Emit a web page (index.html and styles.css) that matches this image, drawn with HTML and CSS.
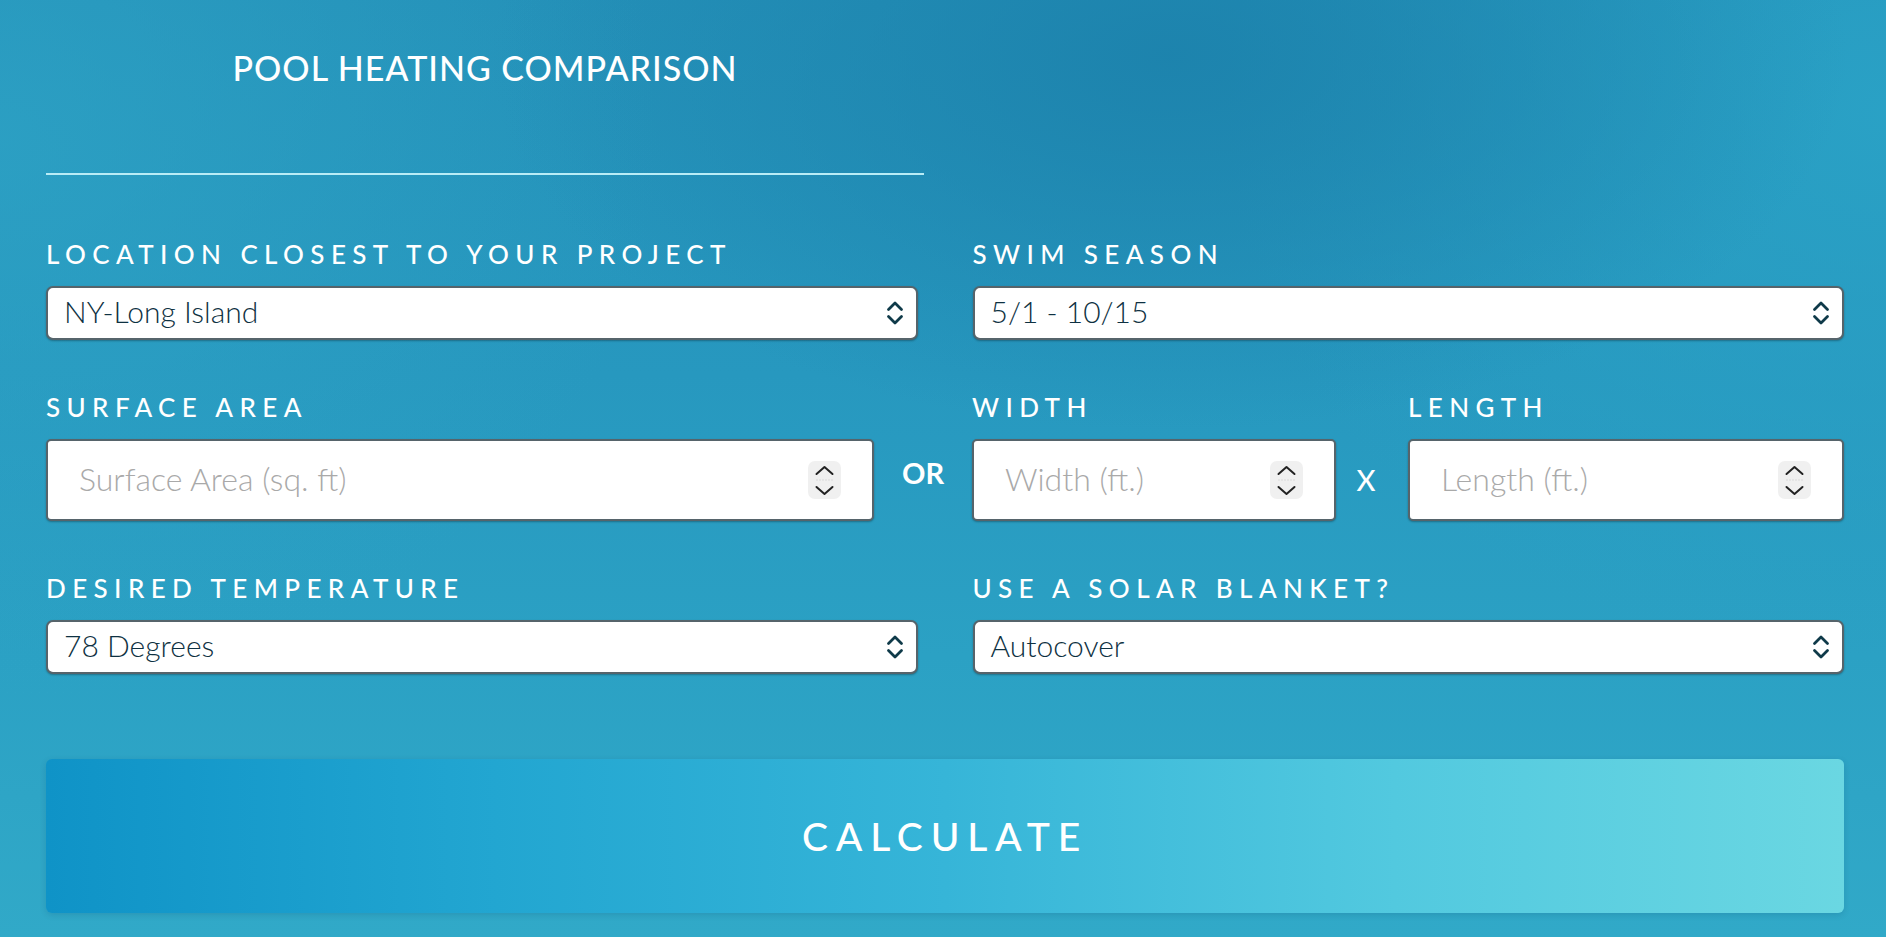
FILE: index.html
```html
<!DOCTYPE html>
<html lang="en">
<head>
<meta charset="utf-8">
<title>Pool Heating Comparison</title>
<link rel="stylesheet" href="styles.css">
</head>
<body>
<main class="calc">
  <header class="calc-head">
    <h1 class="calc-title">POOL HEATING COMPARISON</h1>
    <div class="calc-divider"></div>
  </header>

  <div class="row row-two">
    <div class="field">
      <div class="field-label">LOCATION CLOSEST TO YOUR PROJECT</div>
      <div class="select">
        <span class="select-value">NY-Long Island</span>
        <svg class="select-icon" viewBox="0 0 18 26" width="18" height="26" aria-hidden="true"><path d="M2.5 9.5 L9 3 L15.5 9.5 M2.5 16.5 L9 23 L15.5 16.5" fill="none" stroke="#0f3a49" stroke-width="2.8" stroke-linecap="round" stroke-linejoin="round"/></svg>
      </div>
    </div>
    <div class="field">
      <div class="field-label">SWIM SEASON</div>
      <div class="select">
        <span class="select-value">5/1 - 10/15</span>
        <svg class="select-icon" viewBox="0 0 18 26" width="18" height="26" aria-hidden="true"><path d="M2.5 9.5 L9 3 L15.5 9.5 M2.5 16.5 L9 23 L15.5 16.5" fill="none" stroke="#0f3a49" stroke-width="2.8" stroke-linecap="round" stroke-linejoin="round"/></svg>
      </div>
    </div>
  </div>

  <div class="row row-dims">
    <div class="field field-area">
      <div class="field-label">SURFACE AREA</div>
      <div class="num">
        <span class="num-ph">Surface Area (sq. ft)</span>
        <span class="spin"><svg viewBox="0 0 33 38" width="33" height="38" aria-hidden="true"><line x1="8" y1="19" x2="25" y2="19" stroke="#dadada" stroke-width="1" stroke-dasharray="2 1"/><path d="M8.5 13 L16.5 6 L24.5 13 M8.5 26 L16.5 33 L24.5 26" fill="none" stroke="#222" stroke-width="2" stroke-linecap="round" stroke-linejoin="round"/></svg></span>
      </div>
    </div>
    <span class="op op-or">OR</span>
    <div class="field field-width">
      <div class="field-label">WIDTH</div>
      <div class="num">
        <span class="num-ph">Width (ft.)</span>
        <span class="spin"><svg viewBox="0 0 33 38" width="33" height="38" aria-hidden="true"><line x1="8" y1="19" x2="25" y2="19" stroke="#dadada" stroke-width="1" stroke-dasharray="2 1"/><path d="M8.5 13 L16.5 6 L24.5 13 M8.5 26 L16.5 33 L24.5 26" fill="none" stroke="#222" stroke-width="2" stroke-linecap="round" stroke-linejoin="round"/></svg></span>
      </div>
    </div>
    <span class="op op-x">X</span>
    <div class="field field-length">
      <div class="field-label">LENGTH</div>
      <div class="num">
        <span class="num-ph">Length (ft.)</span>
        <span class="spin"><svg viewBox="0 0 33 38" width="33" height="38" aria-hidden="true"><line x1="8" y1="19" x2="25" y2="19" stroke="#dadada" stroke-width="1" stroke-dasharray="2 1"/><path d="M8.5 13 L16.5 6 L24.5 13 M8.5 26 L16.5 33 L24.5 26" fill="none" stroke="#222" stroke-width="2" stroke-linecap="round" stroke-linejoin="round"/></svg></span>
      </div>
    </div>
  </div>

  <div class="row row-two">
    <div class="field">
      <div class="field-label">DESIRED TEMPERATURE</div>
      <div class="select">
        <span class="select-value">78 Degrees</span>
        <svg class="select-icon" viewBox="0 0 18 26" width="18" height="26" aria-hidden="true"><path d="M2.5 9.5 L9 3 L15.5 9.5 M2.5 16.5 L9 23 L15.5 16.5" fill="none" stroke="#0f3a49" stroke-width="2.8" stroke-linecap="round" stroke-linejoin="round"/></svg>
      </div>
    </div>
    <div class="field">
      <div class="field-label">USE A SOLAR BLANKET?</div>
      <div class="select">
        <span class="select-value">Autocover</span>
        <svg class="select-icon" viewBox="0 0 18 26" width="18" height="26" aria-hidden="true"><path d="M2.5 9.5 L9 3 L15.5 9.5 M2.5 16.5 L9 23 L15.5 16.5" fill="none" stroke="#0f3a49" stroke-width="2.8" stroke-linecap="round" stroke-linejoin="round"/></svg>
      </div>
    </div>
  </div>

  <button class="calc-btn" type="button">CALCULATE</button>
</main>
</body>
</html>
```

FILE: styles.css
```css
* { box-sizing: border-box; }

html, body {
  margin: 0;
  padding: 0;
  height: 100%;
}

body {
  font-family: "Lato", "Liberation Sans", sans-serif;
  color: #ffffff;
  background:
    radial-gradient(ellipse 36% 40% at 62% 6%, rgba(28, 130, 172, 0.9) 0%, rgba(28, 130, 172, 0) 100%),
    radial-gradient(ellipse 35% 60% at 100% 12%, rgba(42, 162, 198, 0.95) 0%, rgba(42, 162, 198, 0) 100%),
    radial-gradient(ellipse 35% 60% at 0% 15%, rgba(46, 164, 198, 0.7) 0%, rgba(46, 164, 198, 0) 100%),
    linear-gradient(180deg, #2490b8 0%, #2798bf 40%, #2ba1c4 70%, #31a9c8 100%);
  overflow: hidden;
}

.calc {
  padding: 48px 42px 0 46px;
}

.calc-head {
  width: 878px;
}

.calc-title {
  margin: 0;
  text-align: center;
  font-size: 34px;
  line-height: 40px;
  font-weight: 500;
  letter-spacing: 1px;
}

.calc-divider {
  margin-top: 85px;
  height: 2px;
  background: #b9ecf6;
}

.row {
  display: flex;
}

.row-two {
  gap: 55px;
}

.row-two > .field {
  flex: 1 1 0;
}

.calc-head + .row {
  margin-top: 65px;
}

.row + .row {
  margin-top: 53px;
}

.field-label {
  font-size: 26px;
  line-height: 28px;
  font-weight: 500;
  letter-spacing: 6.4px;
  white-space: nowrap;
  margin-bottom: 18px;
}

.select {
  height: 54px;
  background: #ffffff;
  border: 2px solid #56646b;
  border-radius: 7px;
  box-shadow: 0 1px 2px rgba(0, 0, 0, 0.3);
  display: flex;
  align-items: center;
  justify-content: space-between;
  padding: 0 12px 0 16px;
}

.select-value {
  font-size: 30px;
  font-weight: 300;
  color: #0e3142;
  margin-bottom: 4px;
}

.select-icon {
  display: block;
}

.row-dims {
  align-items: flex-end;
}

.field-area { width: 828px; }
.field-width { width: 364px; }
.field-length { flex: 1 1 0; }

.num {
  height: 82px;
  background: #ffffff;
  border: 2px solid #56646b;
  border-radius: 5px;
  box-shadow: 0 1px 2px rgba(0, 0, 0, 0.3);
  display: flex;
  align-items: center;
  justify-content: space-between;
  padding: 0 31px;
}

.num-ph {
  font-size: 32px;
  font-weight: 300;
  color: #a9a9a9;
  margin-bottom: 4px;
}

.spin {
  display: block;
  background: #f0f0f0;
  border-radius: 7px;
  width: 33px;
  height: 38px;
}

.spin svg { display: block; }

.op {
  flex: none;
  height: 82px;
  display: flex;
  align-items: center;
  justify-content: center;
}

.op-or {
  width: 98px;
  padding-bottom: 16px;
  font-size: 29px;
  font-weight: 700;
}

.op-x {
  width: 72px;
  padding-right: 12px;
  padding-bottom: 2px;
  font-size: 29px;
  font-weight: 500;
}

.calc-btn {
  display: block;
  width: 100%;
  height: 154px;
  margin-top: 85px;
  border: none;
  border-radius: 6px;
  background: linear-gradient(90deg, #0f93c7 0%, #22a6d1 25%, #36b5d8 50%, #52c9df 75%, #6ad7e2 100%);
  box-shadow: 0 2px 6px rgba(0, 50, 80, 0.15);
  color: #ffffff;
  font-family: "Lato", "Liberation Sans", sans-serif;
  font-size: 39px;
  font-weight: 500;
  letter-spacing: 0.2em;
  padding: 0;
  cursor: pointer;
}
```
